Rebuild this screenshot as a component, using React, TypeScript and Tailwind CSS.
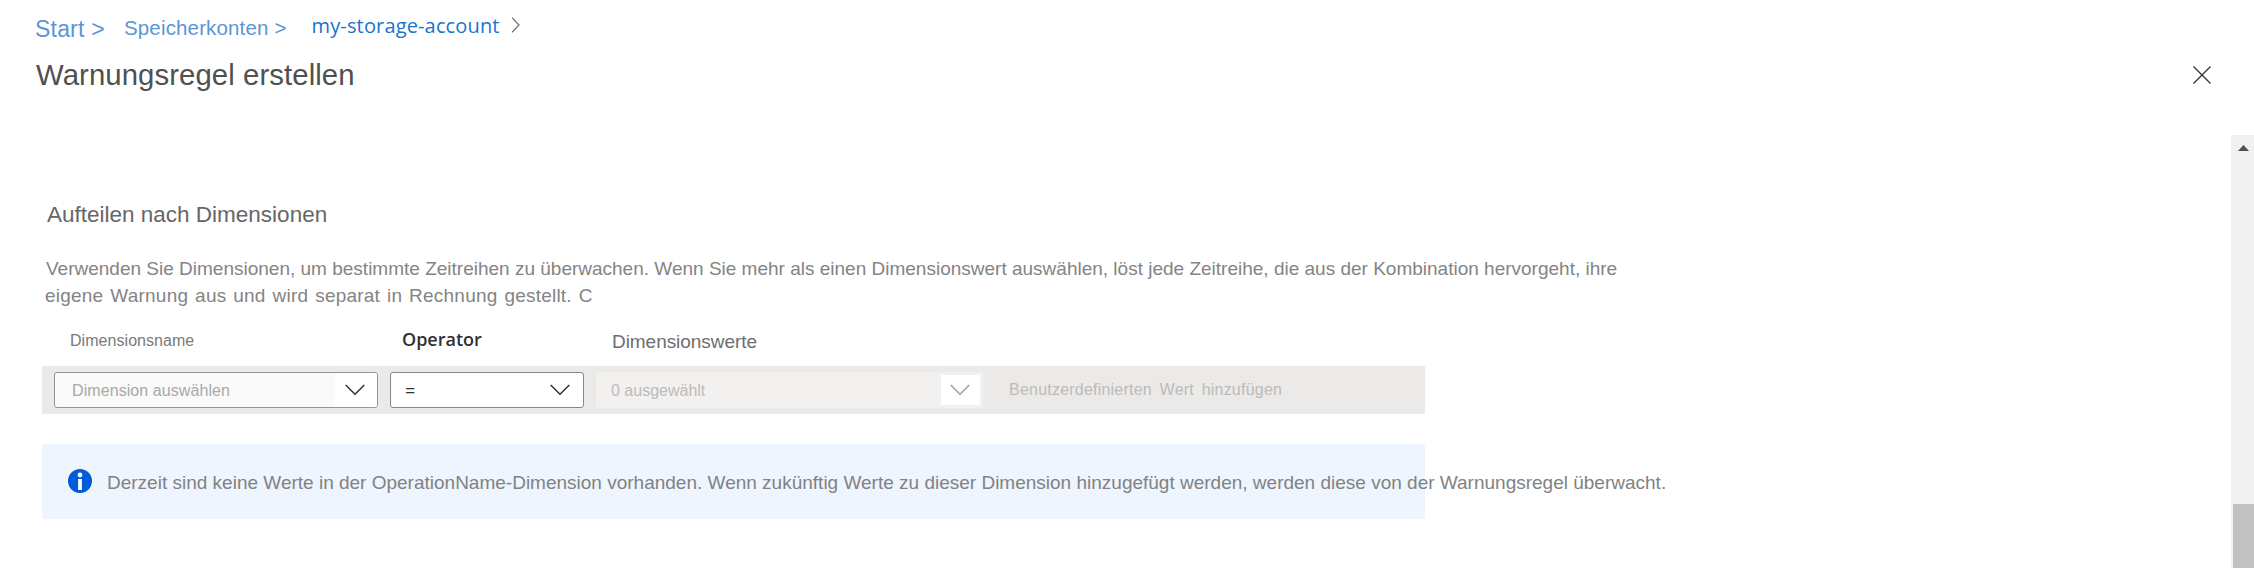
import type { ReactNode } from "react";

function Chevron({ className }: { className: string }) {
  return (
    <svg width="20" height="12" viewBox="0 0 20 12" fill="none" className={className}>
      <path d="M0.7 1 L10 10.3 L19.3 1" stroke="currentColor" strokeWidth="1.5" />
    </svg>
  );
}

function Breadcrumb() {
  return (
    <nav className="flex h-[59px] items-start pl-[35px] leading-[24px] whitespace-nowrap text-[#5b95d6]">
      <a className="mt-[17px] w-[89px] text-[23px] tracking-[0.2px]">Start &gt;</a>
      <a className="mt-[16px] w-[187.5px] text-[20.5px] tracking-[0.15px]">Speicherkonten &gt;</a>
      <a className="mt-[14px] w-[199px] font-['Open_Sans',sans-serif] text-[20px] tracking-[0.15px] text-[#1a73cc]">
        my-storage-account
      </a>
      <svg width="9" height="16" viewBox="0 0 9 16" fill="none" className="mt-[17px] text-[#6b6b6b]">
        <path d="M1 0.7 L8 8 L1 15.3" stroke="currentColor" strokeWidth="1.2" />
      </svg>
    </nav>
  );
}

function Header() {
  return (
    <div className="flex h-[76px] items-start justify-between pr-[43px] pl-[36px]">
      <h1 className="text-[29.33px] leading-[32px] tracking-[0.08px] whitespace-nowrap text-[#505050]">
        Warnungsregel erstellen
      </h1>
      <svg width="18" height="18" viewBox="0 0 18 18" className="mt-[7px] text-[#333]">
        <path d="M0.5 0.5 L17.5 17.5 M17.5 0.5 L0.5 17.5" stroke="currentColor" strokeWidth="1.3" />
      </svg>
    </div>
  );
}

function Select({ className, children }: { className: string; children: ReactNode }) {
  return <div className={"flex h-[36px] items-center rounded-[3px] " + className}>{children}</div>;
}

function EqualsSign() {
  return (
    <svg width="10" height="7" viewBox="0 0 10 7" className="text-[#323130]">
      <path d="M0 1 H10 M0 6 H10" stroke="currentColor" strokeWidth="1.3" />
    </svg>
  );
}

function DimensionTable() {
  return (
    <section className="mt-[17px] ml-[42px] w-[1383px]">
      <div className="flex h-[39px] items-start leading-[24px] whitespace-nowrap">
        <span className="mt-[2px] w-[360px] pl-[28px] text-[16px] tracking-[0.05px] text-[#7a7a7a]">Dimensionsname</span>
        <span className="w-[209px] font-['Open_Sans',sans-serif] text-[18px] font-semibold text-[#323130]">Operator</span>
        <span className="mt-[3px] ml-[1px] text-[19px] tracking-[-0.05px] text-[#6e6e6e]">Dimensionswerte</span>
      </div>
      <div className="flex h-[48px] items-center bg-[#ebeae8] pl-[12px] text-[16px] whitespace-nowrap">
        <Select className="w-[324px] justify-between border border-[#979593] bg-[#fafafa] pl-[17px]">
          <span className="pt-[2px] tracking-[0.08px] text-[#a8a8a8]">Dimension auswählen</span>
          <span className="flex h-full w-[42px] items-center rounded-r-[2px] bg-white pl-[10px]">
            <Chevron className="text-[#323130]" />
          </span>
        </Select>
        <Select className="ml-[12px] w-[194px] justify-between border border-[#8a8886] bg-white pr-[13px] pl-[14px]">
          <span className="font-['Open_Sans',sans-serif] text-[18px] leading-[20px] text-[#323130]">=</span>
          <Chevron className="text-[#323130]" />
        </Select>
        <Select className="ml-[12px] w-[387px] justify-between bg-[#f2f1ef] pr-[3px] pl-[15px]">
          <span className="pt-[2px] text-[#bcbbb9]">0 ausgewählt</span>
          <span className="flex h-[30px] w-[39px] items-center bg-white pl-[9px]">
            <Chevron className="text-[#a0a0a0]" />
          </span>
        </Select>
        <span className="mt-[1px] ml-[26px] tracking-[0.22px] text-[#bcbbb9] [word-spacing:3px]">
          Benutzerdefinierten Wert hinzufügen
        </span>
      </div>
    </section>
  );
}

function InfoBar() {
  return (
    <div className="mt-[30px] ml-[42px] flex h-[75px] w-[1383px] items-start rounded-[3px] bg-[#eff5fe] pl-[26px]">
      <svg width="24" height="24" viewBox="0 0 24 24" className="mt-[25px] shrink-0">
        <circle cx="12" cy="12" r="12" fill="#015cda" />
        <circle cx="12" cy="6" r="2.4" fill="#fff" />
        <rect x="10.1" y="10" width="3.8" height="11" fill="#fff" />
      </svg>
      <p className="mt-[27px] ml-[15px] text-[19px] leading-[24px] whitespace-nowrap text-[#808284]">
        Derzeit sind keine Werte in der OperationName-Dimension vorhanden. Wenn zukünftig Werte zu dieser Dimension
        hinzugefügt werden, werden diese von der Warnungsregel überwacht.
      </p>
    </div>
  );
}

function Scrollbar() {
  return (
    <div className="flex w-[23px] shrink-0 flex-col items-end justify-between bg-[#f0f0f0]">
      <svg width="23" height="20" viewBox="0 0 23 20">
        <path d="M7 16 L12.5 10 L18 16 Z" fill="#505050" />
      </svg>
      <div className="h-[64px] w-[21px] bg-[#c1c1c1]" />
    </div>
  );
}

export default function App() {
  return (
    <div className="flex h-[568px] w-[2254px] flex-col overflow-hidden bg-white font-['Liberation_Sans',sans-serif]">
      <Breadcrumb />
      <Header />
      <div className="flex h-[433px] justify-between">
        <main className="w-[1700px]">
          <h2 className="mt-[66px] ml-[47px] text-[22.5px] leading-[28px] whitespace-nowrap text-[#666]">
            Aufteilen nach Dimensionen
          </h2>
          <p className="mt-[26px] ml-[46px] text-[19px] leading-[27.4px] whitespace-nowrap text-[#848484]">
            Verwenden Sie Dimensionen, um bestimmte Zeitreihen zu überwachen. Wenn Sie mehr als einen Dimensionswert
            auswählen, löst jede Zeitreihe, die aus der Kombination hervorgeht, ihre
            <br />
            <span className="ml-[-1px] tracking-[0.22px] [word-spacing:1.4px]">
              eigene Warnung aus und wird separat in Rechnung gestellt. C
            </span>
          </p>
          <DimensionTable />
          <InfoBar />
        </main>
        <Scrollbar />
      </div>
    </div>
  );
}
